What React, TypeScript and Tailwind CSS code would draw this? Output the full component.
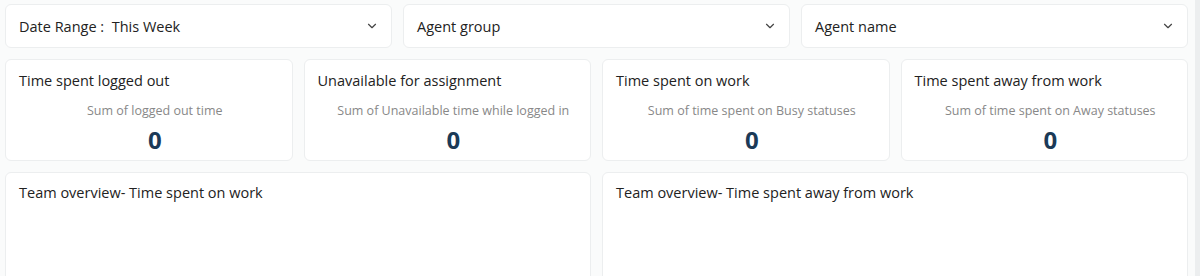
import { ChevronDown } from "lucide-react";

const filters = ["Date Range :  This Week", "Agent group", "Agent name"];

const stats = [
    { title: "Time spent logged out", sub: "Sum of logged out time", value: 0 },
    { title: "Unavailable for assignment", sub: "Sum of Unavailable time while logged in", value: 0 },
    { title: "Time spent on work", sub: "Sum of time spent on Busy statuses", value: 0 },
    { title: "Time spent away from work", sub: "Sum of time spent on Away statuses", value: 0 },
];

const overviews = ["Team overview- Time spent on work", "Team overview- Time spent away from work"];

const App = () => {
    return (
        <div className="w-full h-[276px] overflow-hidden flex bg-[#fafbfb] text-[#222] font-['Segoe_UI','Open_Sans',sans-serif]">
            <div className="flex-1 pl-[5px] pr-[7px] pt-[4px] flex flex-col gap-[11px]">
                <div className="grid grid-cols-3 gap-[11px]">
                    {filters.map((f) => (
                        <div
                            key={f}
                            className="h-[44px] bg-white border border-[#eceeef] rounded-md flex items-center justify-between pl-[13px] pr-[12px]"
                        >
                            <span className="text-[14.5px] leading-[20px] pt-[2px] whitespace-pre">{f}</span>
                            <ChevronDown size={14} strokeWidth={2} className="text-[#444]" />
                        </div>
                    ))}
                </div>
                <div className="grid grid-cols-4 gap-[11px]">
                    {stats.map((s) => (
                        <div
                            key={s.title}
                            className="h-[102px] bg-white border border-[#eceeef] rounded-md pt-[11px] px-[13px]"
                        >
                            <div className="text-[14.5px] leading-[20px]">{s.title}</div>
                            <div className="pl-[12px] flex flex-col items-center">
                                <div className="mt-[12px] text-[12.5px] leading-[16px] text-[#888]">{s.sub}</div>
                                <div className="mt-[7px] text-[24px] leading-[28px] font-bold text-[#1b3a57]">{s.value}</div>
                            </div>
                        </div>
                    ))}
                </div>
                <div className="grid grid-cols-2 gap-[11px]">
                    {overviews.map((o) => (
                        <div
                            key={o}
                            className="h-[140px] bg-white border border-[#eceeef] rounded-md pt-[10px] px-[13px]"
                        >
                            <div className="text-[14.5px] leading-[20px]">{o}</div>
                        </div>
                    ))}
                </div>
            </div>
            <div className="w-[5px] bg-[#eceeef]" />
        </div>
    );
};

export default App;
